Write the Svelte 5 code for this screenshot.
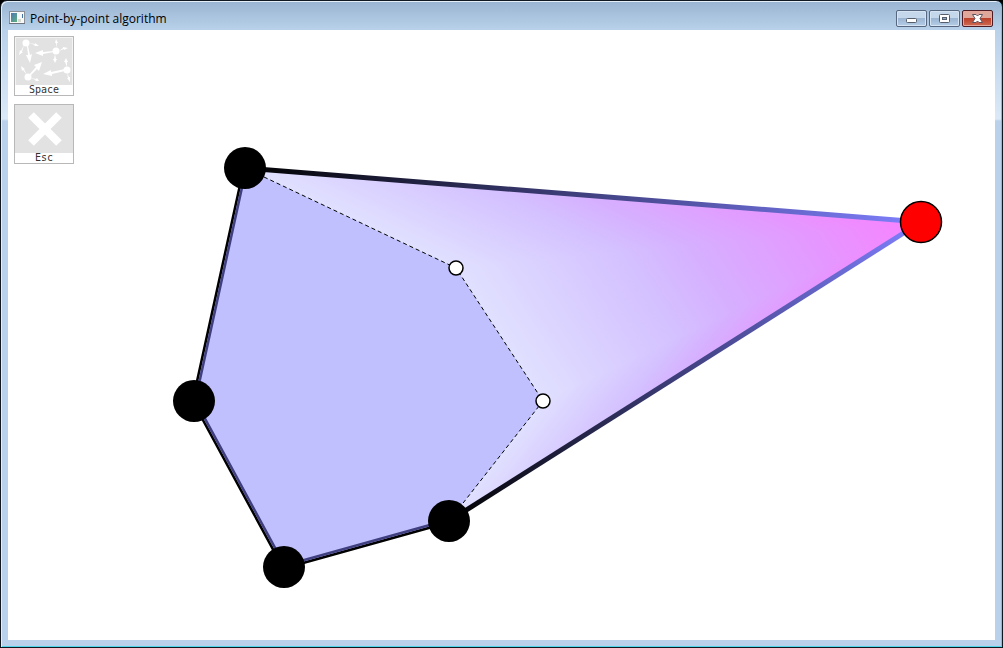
<script>
  const hull = [
    { x: 245, y: 168 },
    { x: 194, y: 401 },
    { x: 284, y: 567 },
    { x: 449, y: 521 }
  ];
  const inner = [
    { x: 456, y: 268 },
    { x: 543, y: 401 }
  ];
  const tip = { x: 921, y: 222 };

  const pts = (list) => list.map((p) => `${p.x},${p.y}`).join(' ');
  const body = pts([...hull, ...[...inner].reverse()]);
  const edge = pts(hull);
  const rim = [hull[0], ...inner, hull[3]];
  const dashes = pts(rim);

  // Each shaded triangle blends from its inner side to the new point.
  const fans = rim.slice(0, -1).map((a, i) => {
    const b = rim[i + 1];
    const dx = b.x - a.x;
    const dy = b.y - a.y;
    const k = ((tip.x - a.x) * dx + (tip.y - a.y) * dy) / (dx * dx + dy * dy);
    return { id: `fan${i}`, a, b, from: { x: a.x + k * dx, y: a.y + k * dy } };
  });
  const sides = [hull[0], hull[3]];
</script>

<div class="window">
  <header class="titlebar">
    <svg class="appicon" viewBox="0 0 16 14" aria-hidden="true">
      <defs>
        <linearGradient id="pane" x1="0" y1="0" x2="1" y2="1">
          <stop offset="0" stop-color="#4d78b8" /><stop offset="1" stop-color="#5faf7c" />
        </linearGradient>
      </defs>
      <rect x="0.5" y="0.5" width="15" height="12" fill="#f8f8f8" stroke="#8b8f96" />
      <path d="M0 12.5H16" stroke="#6d737c" />
      <rect x="2" y="2" width="6" height="9" fill="url(#pane)" />
      <rect x="9" y="8" width="3" height="3" fill="#d3dbd0" />
      <rect x="13" y="3" width="1" height="4" fill="#4774a6" />
    </svg>
    <h1>Point-by-point algorithm</h1>
    <div class="controls">
      <button aria-label="Minimize">
        <svg viewBox="0 0 13 11"><rect x="1.5" y="5.5" width="10" height="4" rx="1" fill="#fff" stroke="#565e6c" /></svg>
      </button>
      <button aria-label="Maximize">
        <svg viewBox="0 0 13 11"><rect x="1.5" y="1.5" width="10" height="8" rx="1" fill="#fff" stroke="#565e6c" /><rect x="4.5" y="4.5" width="4" height="2" fill="#8fa9c7" stroke="#565e6c" /></svg>
      </button>
      <button class="close" aria-label="Close">
        <svg viewBox="0 0 13 11"><path d="M1.500 1.500H5L6.500 3L8 1.500H11.500L9 5.500L11.500 9.500H8L6.500 8L5 9.500H1.500L4 5.500Z" fill="#fff" stroke="#5c5160" /></svg>
      </button>
    </div>
  </header>

  <main>
    <svg class="scene" viewBox="8 30 987 610" preserveAspectRatio="xMinYMin meet" role="img" aria-label="Convex hull joined to a new point">
      <defs>
        {#each fans as f}
          <linearGradient id={f.id} gradientUnits="userSpaceOnUse" x1={f.from.x} y1={f.from.y} x2={tip.x} y2={tip.y}>
            <stop offset="0" stop-color="#e0e0ff" />
            <stop offset="0.35" stop-color="#d4c1ff" />
            <stop offset="0.5" stop-color="#d6b0ff" />
            <stop offset="0.75" stop-color="#e498ff" />
            <stop offset="1" stop-color="#fa80ff" />
          </linearGradient>
        {/each}
        {#each sides as s, i}
          <linearGradient id={`side${i}`} gradientUnits="userSpaceOnUse" x1={s.x} y1={s.y} x2={tip.x} y2={tip.y}>
            <stop offset="0" stop-color="#000" />
            <stop offset="1" stop-color="#8080ff" />
          </linearGradient>
        {/each}
        <clipPath id="inside"><polygon points={body} /></clipPath>
      </defs>

      {#each fans as f}
        <polygon points={pts([f.a, f.b, tip])} fill={`url(#${f.id})`} shape-rendering="crispEdges" />
      {/each}
      <polyline points={edge} fill="none" stroke="#000" stroke-width="5" />
      <polygon points={body} fill="#c0c0ff" />
      <polyline points={edge} fill="none" stroke="#404080" stroke-width="5" clip-path="url(#inside)" />
      <polyline points={dashes} fill="none" stroke="#000" stroke-dasharray="4 3" />
      {#each sides as s, i}
        <line x1={s.x} y1={s.y} x2={tip.x} y2={tip.y} stroke={`url(#side${i})`} stroke-width="5" />
      {/each}
      {#each hull as p}
        <circle cx={p.x} cy={p.y} r="21" />
      {/each}
      {#each inner as p}
        <circle cx={p.x} cy={p.y} r="7" fill="#fff" stroke="#000" stroke-width="1.5" />
      {/each}
      <circle cx={tip.x} cy={tip.y} r="20.5" fill="#f00" stroke="#000" stroke-width="1.5" />
    </svg>

    <nav class="tools">
      <button>
        <svg viewBox="0 0 58 48" aria-hidden="true">
          <path d="M0.500 48V0.500H57.500V48" fill="none" stroke="#f4f4f4" />
          <g fill="#fff">
            <circle cx="11" cy="6" r="3.500" /><circle cx="41" cy="14" r="3.500" />
            <circle cx="52" cy="33" r="3.500" /><circle cx="13" cy="40" r="3.500" />
            <path d="M15 26L11 18L13 18L12 9H13L15 18L17 17Z" />
            <path d="M20 16L28 13V15L39 14V15L28 17V19Z" />
            <path d="M27 25L24 34L22 32L15 39L14 38L21 30L19 28Z" />
            <path d="M28 37L36 33V35L50 32V34L37 37V39Z" />
            <path d="M24 9L19 9L20 8L14 6L20 7L20 6Z" />
            <path d="M4 18L5 13L6 14L9 8L7 15L8 15Z" />
            <path d="M41 2L43 6H42L41 11L41 6H40Z" />
            <path d="M53 11L49 13V12L44 14L48 11L48 10Z" />
            <path d="M40 26L38 22H39L40 17L41 22H42Z" />
            <path d="M51 21L53 25H52L52 30L50 25H49Z" />
            <path d="M55 45L52 41H53L52 36L54 40H55Z" />
            <path d="M6 29L10 32H9L12 38L8 33L7 34Z" />
            <path d="M24 44L20 44L21 43L15 41L21 42L22 41Z" />
          </g>
        </svg>
        <span>Space</span>
      </button>
      <button>
        <svg viewBox="0 0 58 48" aria-hidden="true">
          <path d="M16 10L44 38M44 10L16 38" stroke="#fff" stroke-width="8" />
        </svg>
        <span>Esc</span>
      </button>
    </nav>
  </main>
</div>

<style>
  :global(body) { margin: 0; background: #000; }
  .window {
    box-sizing: border-box;
    min-height: 100vh;
    display: flex;
    flex-direction: column;
    padding: 0 7px 7px;
    border: 1px solid #101820;
    border-radius: 7px 7px 0 0;
    background: linear-gradient(#99b4d1 0, #b9d1ea 29px, #dbe9f7 118px, #b9d1ea 120px);
    box-shadow: inset 1px 1px #e3eef8, inset -1px -1px #4fd4ea;
  }
  .titlebar {
    display: flex;
    align-items: center;
    height: 29px;
  }
  .appicon { width: 16px; height: 14px; margin: 5px 5px 0 1px; }
  h1 {
    flex: 1;
    margin: 6px 0 0;
    font: 400 12px/16px "Open Sans", sans-serif;
    color: #000;
  }
  .controls { display: flex; gap: 2px; margin: 6px 2px 0 0; }
  .controls button {
    box-sizing: border-box;
    display: grid;
    place-items: center;
    width: 31px;
    height: 17px;
    padding: 0;
    border: 1px solid #56677f;
    border-radius: 2px;
    background: linear-gradient(#c5d7ea 0 45%, #9bb5d2 50%, #b4cde7);
    box-shadow: inset 0 0 0 1px #d5e3f2;
  }
  .controls .close {
    border-color: #4b1c26;
    background: linear-gradient(#dfa79c 0 45%, #bb412c 50%, #cf6a50);
    box-shadow: inset 0 0 0 1px #e5a79b;
  }
  .controls svg { width: 13px; height: 11px; }
  main {
    flex: 1;
    display: grid;
    background: #fff;
  }
  .scene, .tools { grid-area: 1 / 1; }
  .scene { display: block; width: 100%; }
  .tools {
    display: flex;
    flex-direction: column;
    gap: 8px;
    padding: 6px;
    justify-self: start;
    align-self: start;
  }
  .tools button {
    box-sizing: border-box;
    width: 60px;
    height: 60px;
    display: flex;
    flex-direction: column;
    align-items: center;
    padding: 0;
    border: 1px solid #b8b8b8;
    background: #fff;
    font: 10px/10px "DejaVu Sans Mono", monospace;
    color: #333;
  }
  .tools svg { flex: none; width: 58px; height: 48px; background: #e2e2e2; }
</style>
